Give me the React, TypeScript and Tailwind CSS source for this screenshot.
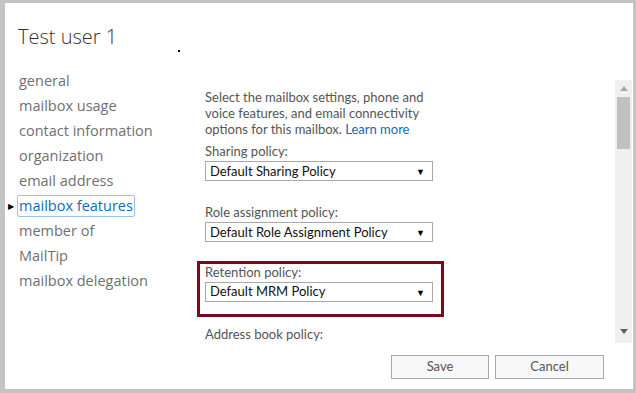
import { ReactNode } from 'react';

const navItems = [
  'general',
  'mailbox usage',
  'contact information',
  'organization',
  'email address',
  'mailbox features',
  'member of',
  'MailTip',
  'mailbox delegation',
];

const bodyFont = { fontFamily: 'Lato, "Open Sans", sans-serif' };

function Dropdown({ value }: { value: string }) {
  return (
    <div className="mt-[2px] flex h-[20px] w-[228px] items-center justify-between border border-[#a9a9a9] bg-white pl-[4px] pr-[7px] text-[13px] text-[#111]">
      <span>{value}</span>
      <span className="text-[9px] leading-none text-black">▼</span>
    </div>
  );
}

function Field({ label, value }: { label: string; value: string }) {
  return (
    <div>
      <div className="h-[16px] text-[13px] leading-[16px] text-[#555]">{label}</div>
      <Dropdown value={value} />
    </div>
  );
}

function Button({ children, width }: { children: ReactNode; width: string }) {
  return (
    <button
      className={`h-[24px] ${width} border border-[#a3abaf] bg-[#f8f8f8] text-[13px] text-[#555]`}
      style={bodyFont}
    >
      {children}
    </button>
  );
}

export default function App() {
  return (
    <div
      className="h-[393px] w-[636px] bg-[#c4c4c4] pb-[4px] pl-[5px] pr-[3px] pt-[3px]"
      style={{ fontFamily: '"Open Sans", "Noto Sans", sans-serif' }}
    >
      <div className="relative flex h-full flex-col bg-white pr-[1px]">
        <div className="pl-[13px] pt-[20px] text-[20px] font-light leading-[28px] text-[#333]">
          Test user 1
        </div>
        <span className="absolute left-[173px] top-[47px] h-[2px] w-[2px] bg-black" />

        <div className="mt-[17px] flex">
          <nav className="w-[192px] shrink-0 pl-[12px]">
            {navItems.map((item) => {
              const active = item === 'mailbox features';
              return (
                <div key={item} className="relative flex h-[25px] items-center">
                  {active && (
                    <span className="absolute left-[-9px] text-[8px] leading-none text-black">▶</span>
                  )}
                  <span
                    className={
                      active
                        ? 'rounded-[2px] border border-[#96c3f2] px-[1px] text-[14.5px] leading-[20px] text-[#0c6cc2]'
                        : 'px-[2px] text-[14.5px] text-[#707070]'
                    }
                  >
                    {item}
                  </span>
                </div>
              );
            })}
          </nav>

          <div className="mt-[12px] flex h-[263px] flex-1 overflow-hidden" style={bodyFont}>
            <div className="flex-1 overflow-hidden">
              <div className="pl-[8px] pt-[9px] text-[13px] leading-[16px] text-[#555]">
                <p className="w-[236px]">
                  Select the mailbox settings, phone and voice features, and email connectivity
                  options for this mailbox. <span className="text-[#0c6cc2]">Learn more</span>
                </p>
                <div className="mt-[6px]">
                  <Field label="Sharing policy:" value="Default Sharing Policy" />
                </div>
                <div className="mt-[23px]">
                  <Field label="Role assignment policy:" value="Default Role Assignment Policy" />
                </div>
              </div>
              <div className="mt-[19px] h-[56px] w-[247px] border-[3px] border-[#7a0a1c] pl-[5px]">
                <Field label="Retention policy:" value="Default MRM Policy" />
              </div>
              <div className="mt-[9px] pl-[8px] text-[13px] leading-[16px] text-[#555]">
                Address book policy:
              </div>
            </div>

            <div className="flex w-[17px] shrink-0 flex-col items-center bg-[#f0f0f0]">
              <div className="flex h-[17px] items-center justify-center">
                <svg width="8" height="5" viewBox="0 0 8 5">
                  <path d="M0 5 L4 0 L8 5 Z" fill="#a6a6a6" />
                </svg>
              </div>
              <div className="h-[52px] w-[13px] bg-[#c1c1c1]" />
              <div className="flex-1" />
              <div className="flex h-[20px] items-start justify-center pt-[6px]">
                <svg width="8" height="5" viewBox="0 0 8 5">
                  <path d="M0 0 L8 0 L4 5 Z" fill="#606060" />
                </svg>
              </div>
            </div>
          </div>
        </div>

        <div className="mt-[12px] flex justify-end gap-[6px] pr-[28px]">
          <Button width="w-[98px]">Save</Button>
          <Button width="w-[109px]">Cancel</Button>
        </div>
      </div>
    </div>
  );
}
